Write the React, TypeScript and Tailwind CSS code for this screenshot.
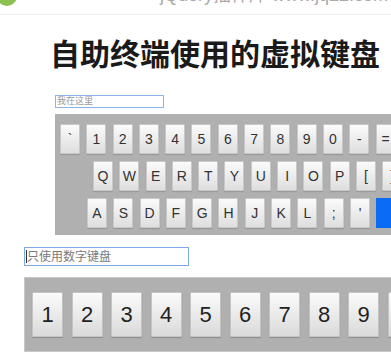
import React from "react";

const row1 = ["`", "1", "2", "3", "4", "5", "6", "7", "8", "9", "0", "-", "=", "←"];
const row2 = ["Q", "W", "E", "R", "T", "Y", "U", "I", "O", "P", "[", "]", "\\"];
const row3 = ["A", "S", "D", "F", "G", "H", "J", "K", "L", ";", "'"];
const digits = ["1", "2", "3", "4", "5", "6", "7", "8", "9", "0"];

function Key({ label }: { label: string }) {
  return (
    <div className="flex h-[30px] w-[20px] shrink-0 items-center justify-center rounded-[1px] border border-[#c9c9c9] bg-gradient-to-b from-[#fbfbfb] to-[#dedede] text-[14px] text-[#333] shadow-[0_1px_1px_rgba(0,0,0,0.15)]">
      {label}
    </div>
  );
}

function BigKey({ label }: { label: string }) {
  return (
    <div className="flex h-[45px] w-[31px] shrink-0 items-center justify-center rounded-[1px] border border-[#c4c4c4] bg-gradient-to-b from-[#fbfbfb] to-[#dadada] text-[22px] text-[#222] shadow-[0_1px_1px_rgba(0,0,0,0.2)]">
      {label}
    </div>
  );
}

export default function App() {
  return (
    <div
      className="relative h-[360px] w-[391px] overflow-hidden bg-white"
      style={{ fontFamily: '"Liberation Sans", "Noto Sans CJK SC", sans-serif' }}
    >
      {/* top bar */}
      <div className="relative h-[15px] border-b border-[#ececec]">
        <div className="absolute left-[-3px] top-[-14px] h-[20px] w-[20px] rounded-full bg-[#8cc152]" />
        <div className="absolute left-[160px] top-[-14px] whitespace-nowrap text-[18px] leading-[18px] text-[#a8a8a8]">
          jQuery插件库 www.jq22.com
        </div>
      </div>

      <h1
        className="mt-[22px] whitespace-nowrap pl-[50px] text-[30px] font-bold leading-[30px] text-[#1a1a1a]"
        style={{ fontFamily: '"Noto Sans CJK SC", sans-serif' }}
      >
        自助终端使用的虚拟键盘
      </h1>

      <div className="ml-[55px] mt-[28px] flex h-[13px] w-[109px] items-center border border-[#8fb4ea] px-[1px] text-[9px] leading-none text-[#9a9a9a]">
        我在这里
      </div>

      {/* full keyboard */}
      <div className="ml-[55px] mt-[6px] flex h-[121px] w-[400px] flex-col gap-[7px] bg-[#b0b0b0] pt-[10px]">
        <div className="flex gap-[6.3px] pl-[5px]">
          {row1.map((k) => (
            <Key key={k} label={k} />
          ))}
        </div>
        <div className="flex gap-[6.3px] pl-[38px]">
          {row2.map((k) => (
            <Key key={k} label={k} />
          ))}
        </div>
        <div className="flex gap-[6.3px] pl-[32px]">
          {row3.map((k) => (
            <Key key={k} label={k} />
          ))}
          <div className="h-[30px] w-[40px] shrink-0 bg-[#0a6cf5]" />
        </div>
      </div>

      <div className="ml-[24px] mt-[12px] flex h-[19px] w-[165px] items-center border border-[#7fa9e8] pl-[1px] text-[12px] leading-none text-[#7a7a7a]">
        <span className="h-[13px] w-px bg-[#333]" />
        只使用数字键盘
      </div>

      {/* numeric keyboard */}
      <div className="ml-[24px] mt-[11px] flex h-[75px] w-[420px] items-center gap-[8.5px] border border-[#c8c8c8] bg-[#b0b0b0] pl-[7px]">
        {digits.map((d) => (
          <BigKey key={d} label={d} />
        ))}
      </div>
    </div>
  );
}
